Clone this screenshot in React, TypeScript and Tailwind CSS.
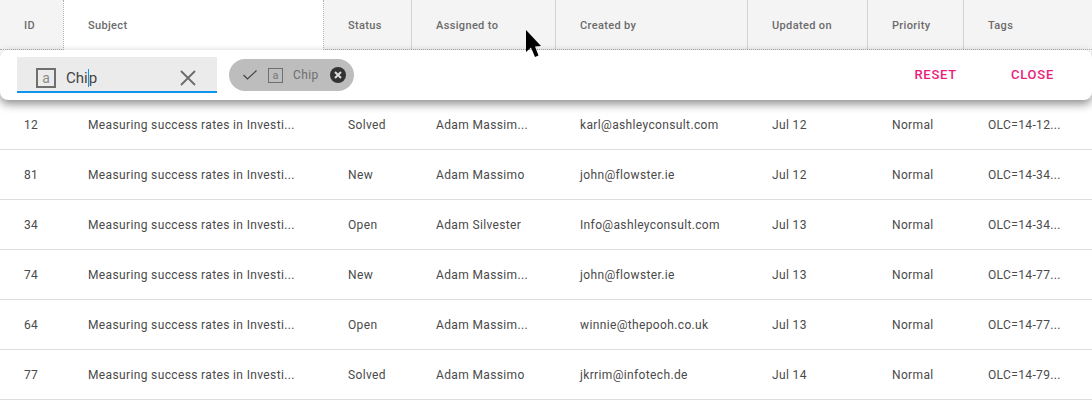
import React from 'react';

const font = 'font-["Roboto",sans-serif]';

// column widths read off the header dividers
const columns = [
  { label: 'ID', width: 'w-[64px]' },
  { label: 'Subject', width: 'w-[260px]' },
  { label: 'Status', width: 'w-[88px]' },
  { label: 'Assigned to', width: 'w-[144px]' },
  { label: 'Created by', width: 'w-[192px]' },
  { label: 'Updated on', width: 'w-[120px]' },
  { label: 'Priority', width: 'w-[96px]' },
  { label: 'Tags', width: 'w-[128px]' },
];

const subject = 'Measuring success rates in Investi...';

const rows = [
  ['12', subject, 'Solved', 'Adam Massim...', 'karl@ashleyconsult.com', 'Jul 12', 'Normal', 'OLC=14-12...'],
  ['81', subject, 'New', 'Adam Massimo', 'john@flowster.ie', 'Jul 12', 'Normal', 'OLC=14-34...'],
  ['34', subject, 'Open', 'Adam Silvester', 'Info@ashleyconsult.com', 'Jul 13', 'Normal', 'OLC=14-34...'],
  ['74', subject, 'New', 'Adam Massim...', 'john@flowster.ie', 'Jul 13', 'Normal', 'OLC=14-77...'],
  ['64', subject, 'Open', 'Adam Massim...', 'winnie@thepooh.co.uk', 'Jul 13', 'Normal', 'OLC=14-77...'],
  ['77', subject, 'Solved', 'Adam Massimo', 'jkrrim@infotech.de', 'Jul 14', 'Normal', 'OLC=14-79...'],
];

const Cross: React.FC<{ className: string }> = ({ className }) => (
  <svg className={className} width="16" height="16" viewBox="0 0 16 16" fill="none" stroke="currentColor" strokeWidth="1.8">
    <path d="M1 1 L15 15 M15 1 L1 15" />
  </svg>
);

const LetterIcon: React.FC<{ className: string }> = ({ className }) => (
  <span className={`flex items-center justify-center border-[#6f6f6f] text-[#8a8a8a] leading-none ${className}`}>a</span>
);

export default function App() {
  return (
    <div className={`relative w-[1092px] h-[401px] overflow-hidden bg-white ${font}`}>
      <div className="flex h-[50px] bg-[#f4f4f4] border-b border-dotted border-[#b0b0b0]">
        {columns.map((col, i) => (
          <div
            key={col.label}
            className={`${col.width} flex items-center pl-6 pt-[3px] text-[11px] font-medium tracking-[0.35px] text-[#6b6b6b] ${
              i === 1 ? 'bg-white -mb-[1px] border-l border-r border-dotted border-[#b0b0b0] -ml-[1px] !w-[261px]' : i === 0 || i === 7 ? '' : 'border-r border-[#d2d2d2]'
            }`}
          >
            {col.label}
          </div>
        ))}
      </div>

      <div className="h-[50px]" />

      {rows.map((row) => (
        <div key={row[0]} className="flex h-[50px] border-b border-[#dddddd] text-[12px] tracking-[0.36px] text-[#4a4a4a]">
          {row.map((cell, i) => (
            <div key={i} className={`${columns[i].width} flex items-center pl-6 whitespace-nowrap`}>
              {cell}
            </div>
          ))}
        </div>
      ))}

      {/* filter panel floating over the first row */}
      <div className="absolute left-0 top-[50px] w-[1092px] h-[50px] flex items-center bg-white rounded-lg shadow-[0_4px_10px_rgba(0,0,0,0.45)]">
        <div className="ml-[17px] w-[200px] h-[36px] flex items-center bg-[#ebebeb] border-b-2 border-[#0f96ec] pl-[19px] pr-[21px] pt-[8px]">
          <LetterIcon className="w-5 h-5 border-2 text-[14px]" />
          <span className="ml-[10px] flex-1 text-[15px] text-[#444444]">
            Chi<span className="border-l border-[#0f96ec]">p</span>
          </span>
          <Cross className="text-[#6b6b6b]" />
        </div>

        <div className="ml-3 w-[125px] h-8 flex items-center rounded-full bg-[#bdbdbd] pl-[14px]">
          <svg width="14" height="10" viewBox="0 0 14 10" fill="none" stroke="#444444" strokeWidth="1.2">
            <path d="M0.5 5 L4.5 9 L13.5 0.5" />
          </svg>
          <LetterIcon className="ml-[11px] w-[15px] h-[15px] border-[1.5px] text-[11px] text-[#777777]" />
          <span className="ml-[10px] text-[12px] font-normal tracking-[0.36px] text-[#6e6e6e]">Chip</span>
          <span className="ml-[11px] w-4 h-4 rounded-full bg-[#333333] flex items-center justify-center">
            <svg width="8" height="8" viewBox="0 0 8 8" fill="none" stroke="#dddddd" strokeWidth="2">
              <path d="M1 1 L7 7 M7 1 L1 7" />
            </svg>
          </span>
        </div>

        <div className="ml-auto flex text-[13px] font-medium tracking-[0.75px] text-[#e91e7b]">
          <span className="mr-[54px]">RESET</span>
          <span className="mr-[38px]">CLOSE</span>
        </div>
      </div>

      {/* mouse pointer */}
      <svg className="absolute left-[525px] top-[29px]" width="18" height="30" viewBox="0 0 18 30">
        <path d="M1 1 L1 23 L6 18.5 L10 28 L13.5 26.5 L10 17.5 L16 17 Z" fill="#000000" />
      </svg>
    </div>
  );
}
